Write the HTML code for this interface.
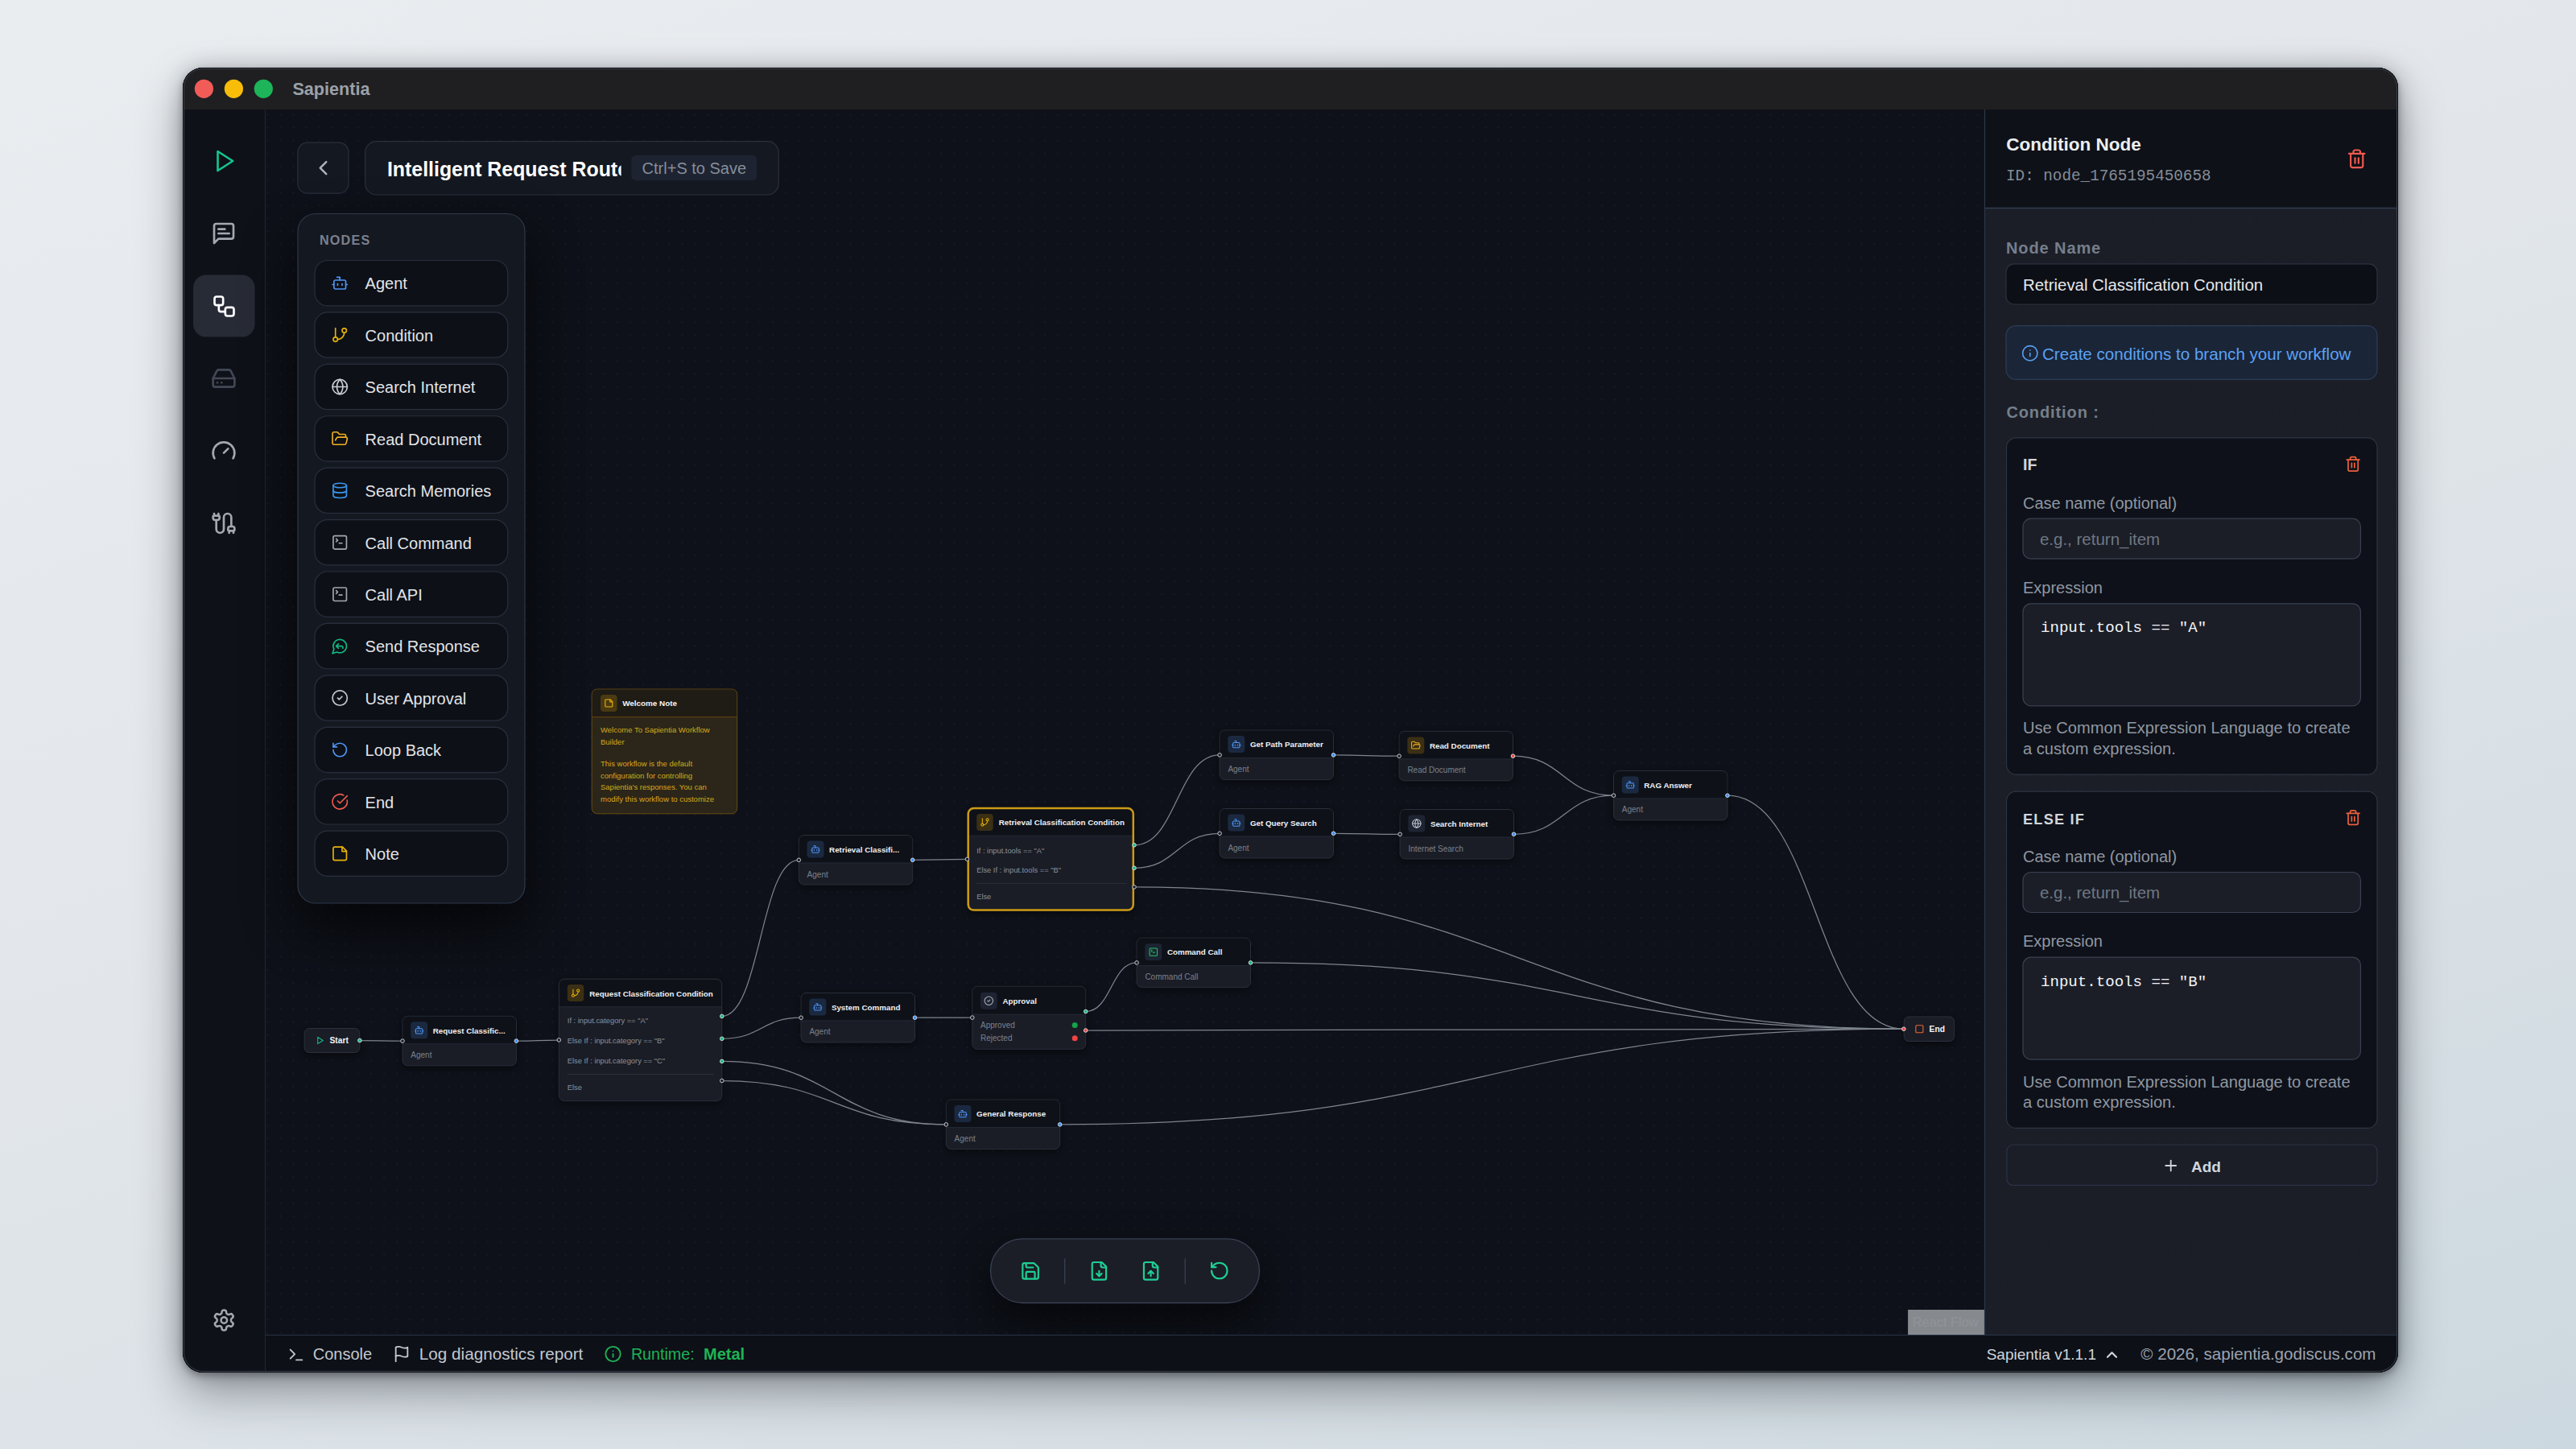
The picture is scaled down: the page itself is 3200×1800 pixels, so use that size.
<!DOCTYPE html>
<html><head><meta charset="utf-8"><title>Sapientia</title>
<style>
html,body{margin:0;padding:0;width:3200px;height:1800px;overflow:hidden;}
body{background:linear-gradient(160deg,#eaedf0 0%,#e3e7eb 40%,#dae1e6 70%,#ccd8df 100%);font-family:'Liberation Sans',sans-serif;position:relative;}
.shadow{position:absolute;left:227px;top:84px;width:2752px;height:1621px;border-radius:25px;box-shadow:0 26px 56px rgba(15,20,30,0.38),0 0 28px rgba(15,20,30,0.20),0 4px 10px rgba(0,0,0,0.30);background:#0f121a;}
svg{position:absolute;left:0;top:0;display:block;}
</style></head><body>
<div class="shadow"></div>
<svg width="3200" height="1800" viewBox="0 0 3200 1800">
<defs>
<clipPath id="win"><rect x="227" y="84" width="2752" height="1621" rx="25"/></clipPath>
<pattern id="dots" x="324.252" y="134.552" width="16.096" height="16.096" patternUnits="userSpaceOnUse"><circle cx="8.048" cy="8.048" r="0.85" fill="#1b1f27"/></pattern>
<pattern id="dots2" x="324.252" y="134.552" width="16.096" height="16.096" patternUnits="userSpaceOnUse"><circle cx="8.048" cy="8.048" r="0.8" fill="#21242c"/></pattern>
<filter id="shpanel" color-interpolation-filters="sRGB" x="-50%" y="-20%" width="200%" height="150%"><feGaussianBlur in="SourceAlpha" stdDeviation="34"/><feOffset dy="30"/><feComponentTransfer><feFuncA type="linear" slope="0.7"/></feComponentTransfer><feMerge><feMergeNode/><feMergeNode in="SourceGraphic"/></feMerge></filter>
<filter id="shnode" color-interpolation-filters="sRGB" x="-20%" y="-20%" width="140%" height="160%"><feGaussianBlur in="SourceAlpha" stdDeviation="4"/><feOffset dy="3"/><feComponentTransfer><feFuncA type="linear" slope="0.45"/></feComponentTransfer><feMerge><feMergeNode/><feMergeNode in="SourceGraphic"/></feMerge></filter>
<clipPath id="titleclip"><rect x="470" y="180" width="301.6" height="60"/></clipPath>
<filter id="shtool" color-interpolation-filters="sRGB" x="-40%" y="-120%" width="180%" height="340%"><feGaussianBlur in="SourceAlpha" stdDeviation="26"/><feOffset dy="22"/><feComponentTransfer><feFuncA type="linear" slope="0.6"/></feComponentTransfer><feMerge><feMergeNode/><feMergeNode in="SourceGraphic"/></feMerge></filter>
</defs>
<g clip-path="url(#win)">
<rect x="227" y="84" width="2752.00" height="1621.00" rx="0" fill="#0e1119"/>
<rect x="227" y="84" width="2752.00" height="52.00" rx="0" fill="#1f1f21"/>
<circle cx="253.4" cy="110.3" r="11.6" fill="#f25c58"/>
<circle cx="290.4" cy="110.3" r="11.6" fill="#f7bd08"/>
<circle cx="327.3" cy="110.3" r="11.6" fill="#1db45a"/>
<text x="363.4" y="118.4" font-family="'Liberation Sans', sans-serif" font-size="21.6" font-weight="bold" fill="#9ca1a9">Sapientia</text>
<rect x="227" y="136" width="103.00" height="1569.00" rx="0" fill="#0e1118"/>
<line x1="329.5" y1="136" x2="329.5" y2="1705" stroke="#222733" stroke-width="1"/>
<rect x="330" y="136" width="2135.00" height="1522.00" rx="0" fill="#0e1119"/>
<rect x="330" y="136" width="2135.00" height="1522.00" rx="0" fill="url(#dots)"/>
<g transform="translate(262.50,184.00) scale(1.3333)" fill="none" stroke="#14c48d" stroke-width="2" stroke-linecap="round" stroke-linejoin="round"><polygon points="6 3 20 12 6 21 6 3"/></g>
<g transform="translate(262.00,274.00) scale(1.3333)" fill="none" stroke="#a3a8b1" stroke-width="2" stroke-linecap="round" stroke-linejoin="round"><path d="M21 15a2 2 0 0 1-2 2H7l-4 4V5a2 2 0 0 1 2-2h14a2 2 0 0 1 2 2z"/><path d="M13 8H7"/><path d="M17 12H7"/></g>
<rect x="240" y="341.6" width="76.60" height="77.00" rx="16" fill="#272b35"/>
<g transform="translate(262.50,364.50) scale(1.3333)" fill="none" stroke="#ffffff" stroke-width="2" stroke-linecap="round" stroke-linejoin="round"><rect width="8" height="8" x="3" y="3" rx="2"/><path d="M7 11v4a2 2 0 0 0 2 2h4"/><rect width="8" height="8" x="13" y="13" rx="2"/></g>
<g transform="translate(262.00,454.00) scale(1.3333)" fill="none" stroke="#424855" stroke-width="2" stroke-linecap="round" stroke-linejoin="round"><line x1="22" x2="2" y1="12" y2="12"/><path d="M5.45 5.11 2 12v6a2 2 0 0 0 2 2h16a2 2 0 0 0 2-2v-6l-3.45-6.89A2 2 0 0 0 16.76 4H7.24a2 2 0 0 0-1.790 1.11z"/><line x1="6" x2="6.01" y1="16" y2="16"/><line x1="10" x2="10.01" y1="16" y2="16"/></g>
<g transform="translate(262.00,544.00) scale(1.3333)" fill="none" stroke="#a3a8b1" stroke-width="2" stroke-linecap="round" stroke-linejoin="round"><path d="m12 14 4-4"/><path d="M3.34 19a10 10 0 1 1 17.32 0"/></g>
<g transform="translate(262.00,634.00) scale(1.3333)" fill="none" stroke="#a3a8b1" stroke-width="2" stroke-linecap="round" stroke-linejoin="round"><path d="M17 21v-2a1 1 0 0 1-1-1v-1a2 2 0 0 1 2-2h2a2 2 0 0 1 2 2v1a1 1 0 0 1-1 1"/><path d="M19 15V6.5a1 1 0 0 0-7 0v11a1 1 0 0 1-7 0V9"/><path d="M21 21v-2h-4"/><path d="M3 5h4V3"/><path d="M7 5a1 1 0 0 1 1 1v1a2 2 0 0 1-2 2H4a2 2 0 0 1-2-2V6a1 1 0 0 1 1-1V3"/></g>
<g transform="translate(263.30,1625.00) scale(1.2500)" fill="none" stroke="#a3a8b1" stroke-width="2" stroke-linecap="round" stroke-linejoin="round"><path d="M12.22 2h-.44a2 2 0 0 0-2 2v.18a2 2 0 0 1-1 1.73l-.43.25a2 2 0 0 1-2 0l-.15-.08a2 2 0 0 0-2.73.73l-.22.38a2 2 0 0 0 .73 2.730l.15.1a2 2 0 0 1 1 1.72v.51a2 2 0 0 1-1 1.74l-.15.09a2 2 0 0 0-.73 2.73l.22.38a2 2 0 0 0 2.73.73l.15-.08a2 2 0 0 1 2 0l.43.25a2 2 0 0 1 1 1.73V20a2 2 0 0 0 2 2h.44a2 2 0 0 0 2-2v-.18a2 2 0 0 1 1-1.73l.43-.25a2 2 0 0 1 2 0l.15.08a2 2 0 0 0 2.73-.73l.22-.39a2 2 0 0 0-.73-2.73l-.15-.08a2 2 0 0 1-1-1.74v-.5a2 2 0 0 1 1-1.74l.15-.09a2 2 0 0 0 .73-2.73l-.22-.38a2 2 0 0 0-2.73-.73l-.15.08a2 2 0 0 1-2 0l-.43-.25a2 2 0 0 1-1-1.73V4a2 2 0 0 0-2-2z"/><circle cx="12" cy="12" r="3"/></g>
<g fill="none" stroke="#7e848e" stroke-width="1.25">
<path d="M446.9,1292.5 C473.20,1292.5 473.20,1293.1 499.5,1293.1"/>
<path d="M641.3,1293.1 C667.80,1293.1 667.80,1292.0 694.3,1292.0"/>
<path d="M896.8,1262.4 C944.55,1262.4 944.55,1068.3 992.3,1068.3"/>
<path d="M896.8,1290.3 C945.95,1290.3 945.95,1264.2 995.1,1264.2"/>
<path d="M896.8,1318.4 C1036.05,1318.4 1036.05,1396.9 1175.3,1396.9"/>
<path d="M896.8,1342.5 C1036.05,1342.5 1036.05,1396.9 1175.3,1396.9"/>
<path d="M1133.6,1068.3 C1167.55,1068.3 1167.55,1067.4 1201.5,1067.4"/>
<path d="M1409,1049.8 C1462.05,1049.8 1462.05,937.9 1515.1,937.9"/>
<path d="M1409,1078.3 C1462.05,1078.3 1462.05,1035.3 1515.1,1035.3"/>
<path d="M1409,1101.9 C1886.95,1101.9 1886.95,1278.2 2364.9,1278.2"/>
<path d="M1656.4,937.9 C1697.25,937.9 1697.25,939.2 1738.1,939.2"/>
<path d="M1656.4,1035.3 C1697.75,1035.3 1697.75,1036.3 1739.1,1036.3"/>
<path d="M1879.4,939.2 C1941.95,939.2 1941.95,988.2 2004.5,988.2"/>
<path d="M1880.4,1036.3 C1942.45,1036.3 1942.45,988.2 2004.5,988.2"/>
<path d="M2145.8,988.2 C2255.35,988.2 2255.35,1278.2 2364.9,1278.2"/>
<path d="M1136.4,1264.2 C1172.10,1264.2 1172.10,1264.1 1207.8,1264.1"/>
<path d="M1348.7,1256.5 C1380.40,1256.5 1380.40,1195.9 1412.1,1195.9"/>
<path d="M1348.7,1280.0 C1856.80,1280.0 1856.80,1278.2 2364.9,1278.2"/>
<path d="M1553.4,1195.9 C1959.15,1195.9 1959.15,1278.2 2364.9,1278.2"/>
<path d="M1316.6,1396.9 C1840.75,1396.9 1840.75,1278.2 2364.9,1278.2"/>
</g>
<g filter="url(#shnode)">
<rect x="500" y="1262.3" width="141.4" height="61.5" rx="6.5" fill="#1a1d26" stroke="#2a2f3b" stroke-width="1"/>
</g>
<path d="M500.5,1296.8 V1268.8 a6,6 0 0 1 6,-6 H634.9 a6,6 0 0 1 6,6 V1296.8 Z" fill="#0e1118"/>
<line x1="500" y1="1296.8" x2="641.4" y2="1296.8" stroke="#252a35" stroke-width="1"/>
<rect x="510.2" y="1269.3" width="21.00" height="21.00" rx="4" fill="#1b2940"/>
<g transform="translate(514.45,1273.55) scale(0.5208)" fill="none" stroke="#4f96f5" stroke-width="2" stroke-linecap="round" stroke-linejoin="round"><path d="M12 8V4H8"/><rect width="16" height="12" x="4" y="8" rx="2"/><path d="M2 14h2"/><path d="M20 14h2"/><path d="M15 13v2"/><path d="M9 13v2"/></g>
<text x="537.8" y="1283.6" font-family="'Liberation Sans', sans-serif" font-size="9.8" font-weight="bold" fill="#eef0f3">Request Classific...</text>
<text x="510.3" y="1314.3" font-family="'Liberation Sans', sans-serif" font-size="10" font-weight="normal" fill="#7a818d">Agent</text>
<circle cx="500" cy="1293.1" r="2.3" fill="#1a1d26" stroke="#c5c9d0" stroke-width="1"/>
<circle cx="641.4" cy="1293.1" r="2.3" fill="#3b8cf5" stroke="#e5e7eb" stroke-width="0.9"/>
<g filter="url(#shnode)">
<rect x="992.3" y="1037.5" width="141.4" height="61.5" rx="6.5" fill="#1a1d26" stroke="#2a2f3b" stroke-width="1"/>
</g>
<path d="M992.8,1072.0 V1044.0 a6,6 0 0 1 6,-6 H1127.2 a6,6 0 0 1 6,6 V1072.0 Z" fill="#0e1118"/>
<line x1="992.3" y1="1072.0" x2="1133.7" y2="1072.0" stroke="#252a35" stroke-width="1"/>
<rect x="1002.5" y="1044.5" width="21.00" height="21.00" rx="4" fill="#1b2940"/>
<g transform="translate(1006.75,1048.75) scale(0.5208)" fill="none" stroke="#4f96f5" stroke-width="2" stroke-linecap="round" stroke-linejoin="round"><path d="M12 8V4H8"/><rect width="16" height="12" x="4" y="8" rx="2"/><path d="M2 14h2"/><path d="M20 14h2"/><path d="M15 13v2"/><path d="M9 13v2"/></g>
<text x="1030.1" y="1058.8" font-family="'Liberation Sans', sans-serif" font-size="9.8" font-weight="bold" fill="#eef0f3">Retrieval Classifi...</text>
<text x="1002.6" y="1089.5" font-family="'Liberation Sans', sans-serif" font-size="10" font-weight="normal" fill="#7a818d">Agent</text>
<circle cx="992.3" cy="1068.3" r="2.3" fill="#1a1d26" stroke="#c5c9d0" stroke-width="1"/>
<circle cx="1133.7" cy="1068.3" r="2.3" fill="#3b8cf5" stroke="#e5e7eb" stroke-width="0.9"/>
<g filter="url(#shnode)">
<rect x="1515.1" y="907.1" width="141.4" height="61.5" rx="6.5" fill="#1a1d26" stroke="#2a2f3b" stroke-width="1"/>
</g>
<path d="M1515.6,941.6 V913.6 a6,6 0 0 1 6,-6 H1650.0 a6,6 0 0 1 6,6 V941.6 Z" fill="#0e1118"/>
<line x1="1515.1" y1="941.6" x2="1656.5" y2="941.6" stroke="#252a35" stroke-width="1"/>
<rect x="1525.3" y="914.1" width="21.00" height="21.00" rx="4" fill="#1b2940"/>
<g transform="translate(1529.55,918.35) scale(0.5208)" fill="none" stroke="#4f96f5" stroke-width="2" stroke-linecap="round" stroke-linejoin="round"><path d="M12 8V4H8"/><rect width="16" height="12" x="4" y="8" rx="2"/><path d="M2 14h2"/><path d="M20 14h2"/><path d="M15 13v2"/><path d="M9 13v2"/></g>
<text x="1552.9" y="928.4" font-family="'Liberation Sans', sans-serif" font-size="9.8" font-weight="bold" fill="#eef0f3">Get Path Parameter</text>
<text x="1525.4" y="959.1" font-family="'Liberation Sans', sans-serif" font-size="10" font-weight="normal" fill="#7a818d">Agent</text>
<circle cx="1515.1" cy="937.9" r="2.3" fill="#1a1d26" stroke="#c5c9d0" stroke-width="1"/>
<circle cx="1656.5" cy="937.9" r="2.3" fill="#3b8cf5" stroke="#e5e7eb" stroke-width="0.9"/>
<g filter="url(#shnode)">
<rect x="1738.1" y="908.4" width="141.4" height="61.5" rx="6.5" fill="#1a1d26" stroke="#2a2f3b" stroke-width="1"/>
</g>
<path d="M1738.6,942.9 V914.9 a6,6 0 0 1 6,-6 H1873.0 a6,6 0 0 1 6,6 V942.9 Z" fill="#0e1118"/>
<line x1="1738.1" y1="942.9" x2="1879.5" y2="942.9" stroke="#252a35" stroke-width="1"/>
<rect x="1748.3" y="915.4" width="21.00" height="21.00" rx="4" fill="#3b2f14"/>
<g transform="translate(1752.55,919.65) scale(0.5208)" fill="none" stroke="#f2b01e" stroke-width="2" stroke-linecap="round" stroke-linejoin="round"><path d="m6 14 1.5-2.9A2 2 0 0 1 9.24 10H20a2 2 0 0 1 1.94 2.5l-1.54 6a2 2 0 0 1-1.950 1.5H4a2 2 0 0 1-2-2V5a2 2 0 0 1 2-2h3.9a2 2 0 0 1 1.69.9l.81 1.2a2 2 0 0 0 1.67.9H18a2 2 0 0 1 2 2v2"/></g>
<text x="1775.9" y="929.7" font-family="'Liberation Sans', sans-serif" font-size="9.8" font-weight="bold" fill="#eef0f3">Read Document</text>
<text x="1748.4" y="960.4" font-family="'Liberation Sans', sans-serif" font-size="10" font-weight="normal" fill="#7a818d">Read Document</text>
<circle cx="1738.1" cy="939.1999999999999" r="2.3" fill="#1a1d26" stroke="#c5c9d0" stroke-width="1"/>
<circle cx="1879.5" cy="939.2" r="2.3" fill="#ef4444" stroke="#e5e7eb" stroke-width="0.9"/>
<g filter="url(#shnode)">
<rect x="1515.1" y="1004.5" width="141.4" height="61.5" rx="6.5" fill="#1a1d26" stroke="#2a2f3b" stroke-width="1"/>
</g>
<path d="M1515.6,1039.0 V1011.0 a6,6 0 0 1 6,-6 H1650.0 a6,6 0 0 1 6,6 V1039.0 Z" fill="#0e1118"/>
<line x1="1515.1" y1="1039.0" x2="1656.5" y2="1039.0" stroke="#252a35" stroke-width="1"/>
<rect x="1525.3" y="1011.5" width="21.00" height="21.00" rx="4" fill="#1b2940"/>
<g transform="translate(1529.55,1015.75) scale(0.5208)" fill="none" stroke="#4f96f5" stroke-width="2" stroke-linecap="round" stroke-linejoin="round"><path d="M12 8V4H8"/><rect width="16" height="12" x="4" y="8" rx="2"/><path d="M2 14h2"/><path d="M20 14h2"/><path d="M15 13v2"/><path d="M9 13v2"/></g>
<text x="1552.9" y="1025.8" font-family="'Liberation Sans', sans-serif" font-size="9.8" font-weight="bold" fill="#eef0f3">Get Query Search</text>
<text x="1525.4" y="1056.5" font-family="'Liberation Sans', sans-serif" font-size="10" font-weight="normal" fill="#7a818d">Agent</text>
<circle cx="1515.1" cy="1035.3" r="2.3" fill="#1a1d26" stroke="#c5c9d0" stroke-width="1"/>
<circle cx="1656.5" cy="1035.3" r="2.3" fill="#3b8cf5" stroke="#e5e7eb" stroke-width="0.9"/>
<g filter="url(#shnode)">
<rect x="1739.1" y="1005.5" width="141.4" height="61.5" rx="6.5" fill="#1a1d26" stroke="#2a2f3b" stroke-width="1"/>
</g>
<path d="M1739.6,1040.0 V1012.0 a6,6 0 0 1 6,-6 H1874.0 a6,6 0 0 1 6,6 V1040.0 Z" fill="#0e1118"/>
<line x1="1739.1" y1="1040.0" x2="1880.5" y2="1040.0" stroke="#252a35" stroke-width="1"/>
<rect x="1749.3" y="1012.5" width="21.00" height="21.00" rx="4" fill="#1e2433"/>
<g transform="translate(1753.55,1016.75) scale(0.5208)" fill="none" stroke="#c3c8cf" stroke-width="2" stroke-linecap="round" stroke-linejoin="round"><circle cx="12" cy="12" r="10"/><path d="M12 2a14.5 14.5 0 0 0 0 20 14.5 14.5 0 0 0 0-20"/><path d="M2 12h20"/></g>
<text x="1776.9" y="1026.8" font-family="'Liberation Sans', sans-serif" font-size="9.8" font-weight="bold" fill="#eef0f3">Search Internet</text>
<text x="1749.4" y="1057.5" font-family="'Liberation Sans', sans-serif" font-size="10" font-weight="normal" fill="#7a818d">Internet Search</text>
<circle cx="1739.1" cy="1036.3" r="2.3" fill="#1a1d26" stroke="#c5c9d0" stroke-width="1"/>
<circle cx="1880.5" cy="1036.3" r="2.3" fill="#3b8cf5" stroke="#e5e7eb" stroke-width="0.9"/>
<g filter="url(#shnode)">
<rect x="2004.5" y="957.4" width="141.4" height="61.5" rx="6.5" fill="#1a1d26" stroke="#2a2f3b" stroke-width="1"/>
</g>
<path d="M2005.0,991.9 V963.9 a6,6 0 0 1 6,-6 H2139.4 a6,6 0 0 1 6,6 V991.9 Z" fill="#0e1118"/>
<line x1="2004.5" y1="991.9" x2="2145.9" y2="991.9" stroke="#252a35" stroke-width="1"/>
<rect x="2014.7" y="964.4" width="21.00" height="21.00" rx="4" fill="#1b2940"/>
<g transform="translate(2018.95,968.65) scale(0.5208)" fill="none" stroke="#4f96f5" stroke-width="2" stroke-linecap="round" stroke-linejoin="round"><path d="M12 8V4H8"/><rect width="16" height="12" x="4" y="8" rx="2"/><path d="M2 14h2"/><path d="M20 14h2"/><path d="M15 13v2"/><path d="M9 13v2"/></g>
<text x="2042.3" y="978.7" font-family="'Liberation Sans', sans-serif" font-size="9.8" font-weight="bold" fill="#eef0f3">RAG Answer</text>
<text x="2014.8" y="1009.4" font-family="'Liberation Sans', sans-serif" font-size="10" font-weight="normal" fill="#7a818d">Agent</text>
<circle cx="2004.5" cy="988.1999999999999" r="2.3" fill="#1a1d26" stroke="#c5c9d0" stroke-width="1"/>
<circle cx="2145.9" cy="988.2" r="2.3" fill="#3b8cf5" stroke="#e5e7eb" stroke-width="0.9"/>
<g filter="url(#shnode)">
<rect x="995.1" y="1233.4" width="141.4" height="61.5" rx="6.5" fill="#1a1d26" stroke="#2a2f3b" stroke-width="1"/>
</g>
<path d="M995.6,1267.9 V1239.9 a6,6 0 0 1 6,-6 H1130.0 a6,6 0 0 1 6,6 V1267.9 Z" fill="#0e1118"/>
<line x1="995.1" y1="1267.9" x2="1136.5" y2="1267.9" stroke="#252a35" stroke-width="1"/>
<rect x="1005.3000000000001" y="1240.4" width="21.00" height="21.00" rx="4" fill="#1b2940"/>
<g transform="translate(1009.55,1244.65) scale(0.5208)" fill="none" stroke="#4f96f5" stroke-width="2" stroke-linecap="round" stroke-linejoin="round"><path d="M12 8V4H8"/><rect width="16" height="12" x="4" y="8" rx="2"/><path d="M2 14h2"/><path d="M20 14h2"/><path d="M15 13v2"/><path d="M9 13v2"/></g>
<text x="1032.9" y="1254.7" font-family="'Liberation Sans', sans-serif" font-size="9.8" font-weight="bold" fill="#eef0f3">System Command</text>
<text x="1005.4" y="1285.4" font-family="'Liberation Sans', sans-serif" font-size="10" font-weight="normal" fill="#7a818d">Agent</text>
<circle cx="995.1" cy="1264.2" r="2.3" fill="#1a1d26" stroke="#c5c9d0" stroke-width="1"/>
<circle cx="1136.5" cy="1264.2" r="2.3" fill="#3b8cf5" stroke="#e5e7eb" stroke-width="0.9"/>
<g filter="url(#shnode)">
<rect x="1412.1" y="1165.1" width="141.4" height="61.5" rx="6.5" fill="#1a1d26" stroke="#2a2f3b" stroke-width="1"/>
</g>
<path d="M1412.6,1199.6 V1171.6 a6,6 0 0 1 6,-6 H1547.0 a6,6 0 0 1 6,6 V1199.6 Z" fill="#0e1118"/>
<line x1="1412.1" y1="1199.6" x2="1553.5" y2="1199.6" stroke="#252a35" stroke-width="1"/>
<rect x="1422.3" y="1172.1" width="21.00" height="21.00" rx="4" fill="#1c2433"/>
<g transform="translate(1426.55,1176.35) scale(0.5208)" fill="none" stroke="#22c55e" stroke-width="2" stroke-linecap="round" stroke-linejoin="round"><path d="m7 11 2-2-2-2"/><path d="M11 13h4"/><rect width="18" height="18" x="3" y="3" rx="2" ry="2"/></g>
<text x="1449.9" y="1186.4" font-family="'Liberation Sans', sans-serif" font-size="9.8" font-weight="bold" fill="#eef0f3">Command Call</text>
<text x="1422.4" y="1217.1" font-family="'Liberation Sans', sans-serif" font-size="10" font-weight="normal" fill="#7a818d">Command Call</text>
<circle cx="1412.1" cy="1195.8999999999999" r="2.3" fill="#1a1d26" stroke="#c5c9d0" stroke-width="1"/>
<circle cx="1553.5" cy="1195.9" r="2.3" fill="#12b981" stroke="#e5e7eb" stroke-width="0.9"/>
<g filter="url(#shnode)">
<rect x="1175.3" y="1366.1" width="141.4" height="61.5" rx="6.5" fill="#1a1d26" stroke="#2a2f3b" stroke-width="1"/>
</g>
<path d="M1175.8,1400.6 V1372.6 a6,6 0 0 1 6,-6 H1310.2 a6,6 0 0 1 6,6 V1400.6 Z" fill="#0e1118"/>
<line x1="1175.3" y1="1400.6" x2="1316.7" y2="1400.6" stroke="#252a35" stroke-width="1"/>
<rect x="1185.5" y="1373.1" width="21.00" height="21.00" rx="4" fill="#1b2940"/>
<g transform="translate(1189.75,1377.35) scale(0.5208)" fill="none" stroke="#4f96f5" stroke-width="2" stroke-linecap="round" stroke-linejoin="round"><path d="M12 8V4H8"/><rect width="16" height="12" x="4" y="8" rx="2"/><path d="M2 14h2"/><path d="M20 14h2"/><path d="M15 13v2"/><path d="M9 13v2"/></g>
<text x="1213.1" y="1387.4" font-family="'Liberation Sans', sans-serif" font-size="9.8" font-weight="bold" fill="#eef0f3">General Response</text>
<text x="1185.6" y="1418.1" font-family="'Liberation Sans', sans-serif" font-size="10" font-weight="normal" fill="#7a818d">Agent</text>
<circle cx="1175.3" cy="1396.8999999999999" r="2.3" fill="#1a1d26" stroke="#c5c9d0" stroke-width="1"/>
<circle cx="1316.7" cy="1396.9" r="2.3" fill="#3b8cf5" stroke="#e5e7eb" stroke-width="0.9"/>
<g filter="url(#shnode)"><rect x="1207.8" y="1225.2" width="140.9" height="78.1" rx="6.5" fill="#1a1d26" stroke="#2a2f3b" stroke-width="1"/></g>
<path d="M1208.3,1260.2 V1231.7 a6,6 0 0 1 6,-6 H1342.2 a6,6 0 0 1 6,6 V1260.2 Z" fill="#0e1118"/>
<line x1="1207.8" y1="1260.2" x2="1348.7" y2="1260.2" stroke="#252a35" stroke-width="1"/>
<rect x="1218.0" y="1232.7" width="20.60" height="21.00" rx="4" fill="#1e2433"/>
<g transform="translate(1222.05,1236.95) scale(0.5208)" fill="none" stroke="#aeb3bb" stroke-width="2" stroke-linecap="round" stroke-linejoin="round"><circle cx="12" cy="12" r="10"/><path d="m9 12 2 2 4-4"/></g>
<text x="1245.5" y="1246.7" font-family="'Liberation Sans', sans-serif" font-size="9.8" font-weight="bold" fill="#eef0f3">Approval</text>
<text x="1218.0" y="1277.0" font-family="'Liberation Sans', sans-serif" font-size="10" font-weight="normal" fill="#7a818d">Approved</text>
<text x="1218.0" y="1292.8" font-family="'Liberation Sans', sans-serif" font-size="10" font-weight="normal" fill="#7a818d">Rejected</text>
<circle cx="1335.2" cy="1273.5" r="3.5" fill="#16a34a"/>
<circle cx="1335.2" cy="1289.8" r="3.5" fill="#ef4444"/>
<circle cx="1207.8" cy="1264.1000000000001" r="2.3" fill="#1a1d26" stroke="#c5c9d0" stroke-width="1"/>
<circle cx="1348.7" cy="1256.5" r="2.3" fill="#12b981" stroke="#e5e7eb" stroke-width="0.9"/>
<circle cx="1348.7" cy="1280.0" r="2.3" fill="#ef4444" stroke="#e5e7eb" stroke-width="0.9"/>
<g filter="url(#shnode)"><rect x="694.3" y="1216.1" width="202.5" height="151.6" rx="7" fill="#1a1d26"/></g>
<path d="M694.8,1250.7 V1223.1 a6.5,6.5 0 0 1 6.5,-6.5 H889.8 a6.5,6.5 0 0 1 6.5,6.5 V1250.7 Z" fill="#0e1118"/>
<line x1="694.3" y1="1250.7" x2="896.8" y2="1250.7" stroke="#252a35" stroke-width="1"/>
<rect x="694.3" y="1216.1" width="202.5" height="151.6" rx="7" fill="none" stroke="#2a2f3b" stroke-width="1"/>
<rect x="704.8" y="1223.1" width="20.50" height="21.00" rx="4" fill="#3b2f14"/>
<g transform="translate(708.80,1227.35) scale(0.5208)" fill="none" stroke="#eab308" stroke-width="2" stroke-linecap="round" stroke-linejoin="round"><line x1="6" x2="6" y1="3" y2="15"/><circle cx="18" cy="6" r="3"/><circle cx="6" cy="18" r="3"/><path d="M18 9a9 9 0 0 1-9 9"/></g>
<text x="732.3" y="1237.5" font-family="'Liberation Sans', sans-serif" font-size="9.8" font-weight="bold" fill="#eef0f3">Request Classification Condition</text>
<text x="704.8" y="1271.4" font-family="'Liberation Sans', sans-serif" font-size="9.3" font-weight="normal" fill="#8a919c">If : input.category == &quot;A&quot;</text>
<text x="704.8" y="1296.3" font-family="'Liberation Sans', sans-serif" font-size="9.3" font-weight="normal" fill="#8a919c">Else If : input.category == &quot;B&quot;</text>
<text x="704.8" y="1321.1" font-family="'Liberation Sans', sans-serif" font-size="9.3" font-weight="normal" fill="#8a919c">Else If : input.category == &quot;C&quot;</text>
<line x1="704.8" y1="1334.5" x2="886.8" y2="1334.5" stroke="#2a303b" stroke-width="1"/>
<text x="704.8" y="1354" font-family="'Liberation Sans', sans-serif" font-size="9.3" font-weight="normal" fill="#8a919c">Else</text>
<circle cx="694.3" cy="1291.8999999999999" r="2.3" fill="#1a1d26" stroke="#c5c9d0" stroke-width="1"/>
<circle cx="896.8" cy="1262.4" r="2.3" fill="#12b981" stroke="#e5e7eb" stroke-width="0.9"/>
<circle cx="896.8" cy="1290.3" r="2.3" fill="#12b981" stroke="#e5e7eb" stroke-width="0.9"/>
<circle cx="896.8" cy="1318.4" r="2.3" fill="#12b981" stroke="#e5e7eb" stroke-width="0.9"/>
<circle cx="896.8" cy="1342.5" r="2.3" fill="#1a1d26" stroke="#c5c9d0" stroke-width="1"/>
<g filter="url(#shnode)"><rect x="1201.5" y="1002.8" width="207.5" height="129" rx="7" fill="#1a1d26"/></g>
<path d="M1202.0,1038.2 V1009.8 a6.5,6.5 0 0 1 6.5,-6.5 H1402.0 a6.5,6.5 0 0 1 6.5,6.5 V1038.2 Z" fill="#0e1118"/>
<line x1="1201.5" y1="1038.2" x2="1409.0" y2="1038.2" stroke="#252a35" stroke-width="1"/>
<rect x="1202.7" y="1004.0" width="205.1" height="126.6" rx="7" fill="none" stroke="#cc9a16" stroke-width="2.5"/>
<rect x="1213.2" y="1011.0" width="20.50" height="21.00" rx="4" fill="#3b2f14"/>
<g transform="translate(1217.20,1015.25) scale(0.5208)" fill="none" stroke="#eab308" stroke-width="2" stroke-linecap="round" stroke-linejoin="round"><line x1="6" x2="6" y1="3" y2="15"/><circle cx="18" cy="6" r="3"/><circle cx="6" cy="18" r="3"/><path d="M18 9a9 9 0 0 1-9 9"/></g>
<text x="1240.7" y="1025" font-family="'Liberation Sans', sans-serif" font-size="9.8" font-weight="bold" fill="#eef0f3">Retrieval Classification Condition</text>
<text x="1213.2" y="1059.7" font-family="'Liberation Sans', sans-serif" font-size="9.3" font-weight="normal" fill="#8a919c">If : input.tools == &quot;A&quot;</text>
<text x="1213.2" y="1084.4" font-family="'Liberation Sans', sans-serif" font-size="9.3" font-weight="normal" fill="#8a919c">Else If : input.tools == &quot;B&quot;</text>
<line x1="1213.2" y1="1097.3" x2="1399.0" y2="1097.3" stroke="#2a303b" stroke-width="1"/>
<text x="1213.2" y="1117.2" font-family="'Liberation Sans', sans-serif" font-size="9.3" font-weight="normal" fill="#8a919c">Else</text>
<circle cx="1201.5" cy="1067.3" r="2.3" fill="#1a1d26" stroke="#c5c9d0" stroke-width="1"/>
<circle cx="1409.0" cy="1049.8" r="2.3" fill="#12b981" stroke="#e5e7eb" stroke-width="0.9"/>
<circle cx="1409.0" cy="1078.3" r="2.3" fill="#12b981" stroke="#e5e7eb" stroke-width="0.9"/>
<circle cx="1409.0" cy="1101.9" r="2.3" fill="#1a1d26" stroke="#c5c9d0" stroke-width="1"/>
<g filter="url(#shnode)">
<rect x="378.1" y="1277.5" width="68.70" height="30.00" rx="6" fill="#1a1d26" stroke="#2c313c" stroke-width="1"/>
</g>
<g transform="translate(392.00,1287.00) scale(0.4583)" fill="none" stroke="#14c48d" stroke-width="2.2" stroke-linecap="round" stroke-linejoin="round"><polygon points="6 3 20 12 6 21 6 3"/></g>
<text x="409.4" y="1296.3" font-family="'Liberation Sans', sans-serif" font-size="10.3" font-weight="bold" fill="#f3f4f6">Start</text>
<circle cx="446.9" cy="1292.5" r="2.3" fill="#12b981" stroke="#e5e7eb" stroke-width="0.9"/>
<g filter="url(#shnode)">
<rect x="2365.2" y="1263" width="62.50" height="30.50" rx="6" fill="#1a1d26" stroke="#2c313c" stroke-width="1"/>
</g>
<g transform="translate(2378.40,1272.20) scale(0.5000)" fill="none" stroke="#e8683a" stroke-width="2.2" stroke-linecap="round" stroke-linejoin="round"><rect width="18" height="18" x="3" y="3" rx="2"/></g>
<text x="2396.6" y="1281.8" font-family="'Liberation Sans', sans-serif" font-size="10.3" font-weight="bold" fill="#f3f4f6">End</text>
<circle cx="2364.9" cy="1278.2" r="2.3" fill="#ef4444" stroke="#e5e7eb" stroke-width="0.9"/>
<rect x="735.2" y="856.1" width="180.50" height="154.70" rx="6.5" fill="#2b2619" stroke="#6a4d12" stroke-width="1"/>
<path d="M735.7,890.7 V862.6 a6,6 0 0 1 6,-6 H909.2 a6,6 0 0 1 6,6 V890.7 Z" fill="#1f1b15"/>
<line x1="735.2" y1="890.7" x2="915.7" y2="890.7" stroke="#5a3c10" stroke-width="1.2"/>
<rect x="746" y="863" width="20.60" height="21.00" rx="4" fill="#4a3a12"/>
<g transform="translate(750.30,867.50) scale(0.5000)" fill="none" stroke="#eab308" stroke-width="2.2" stroke-linecap="round" stroke-linejoin="round"><path d="M15.5 3H5a2 2 0 0 0-2 2v14c0 1.1.9 2 2 2h14a2 2 0 0 0 2-2V8.5L15.5 3Z"/><path d="M15 3v6h6"/></g>
<text x="773.2" y="877" font-family="'Liberation Sans', sans-serif" font-size="9.9" font-weight="bold" fill="#f3f4f6">Welcome Note</text>
<text x="746" y="909.8" font-family="'Liberation Sans', sans-serif" font-size="9.5" font-weight="normal" fill="#d9a61c">Welcome To Sapientia Workflow</text>
<text x="746" y="924.5" font-family="'Liberation Sans', sans-serif" font-size="9.5" font-weight="normal" fill="#d9a61c">Builder</text>
<text x="746" y="952.4" font-family="'Liberation Sans', sans-serif" font-size="9.5" font-weight="normal" fill="#d9a61c">This workflow is the default</text>
<text x="746" y="967" font-family="'Liberation Sans', sans-serif" font-size="9.5" font-weight="normal" fill="#d9a61c">configuration for controlling</text>
<text x="746" y="981.4" font-family="'Liberation Sans', sans-serif" font-size="9.5" font-weight="normal" fill="#d9a61c">Sapientia&#x27;s responses. You can</text>
<text x="746" y="995.9" font-family="'Liberation Sans', sans-serif" font-size="9.5" font-weight="normal" fill="#d9a61c">modify this workflow to customize</text>
<rect x="369.9" y="177.2" width="63.10" height="63.00" rx="12" fill="#141820" stroke="#2a303c" stroke-width="1.2"/>
<g transform="translate(386.50,193.70) scale(1.2500)" fill="none" stroke="#aeb3bb" stroke-width="2" stroke-linecap="round" stroke-linejoin="round"><path d="m15 18-6-6 6-6"/></g>
<rect x="453.6" y="175.6" width="513.60" height="66.40" rx="14" fill="#141820" stroke="#2a303c" stroke-width="1.2"/>
<g clip-path="url(#titleclip)">
<text x="480.9" y="218.5" font-family="'Liberation Sans', sans-serif" font-size="24.9" font-weight="bold" fill="#ffffff">Intelligent Request Router</text>
</g>
<rect x="784.2" y="192.8" width="156.00" height="31.50" rx="6" fill="#1d2330"/>
<text x="797.6" y="216" font-family="'Liberation Sans', sans-serif" font-size="20" font-weight="normal" fill="#868e9b">Ctrl+S to Save</text>
<g filter="url(#shpanel)">
<rect x="370" y="265.5" width="282.00" height="856.50" rx="22" fill="#141820" stroke="#2f394a" stroke-width="1.2"/>
</g>
<text x="396.9" y="304.3" font-family="'Liberation Sans', sans-serif" font-size="16.2" font-weight="bold" fill="#7a818d" letter-spacing="1.2">NODES</text>
<rect x="391" y="323.5" width="239.80" height="56.30" rx="16" fill="#0d1017" stroke="#28303d" stroke-width="1.2"/>
<g transform="translate(411.20,340.70) scale(0.9167)" fill="none" stroke="#4f96f5" stroke-width="1.8" stroke-linecap="round" stroke-linejoin="round"><path d="M12 8V4H8"/><rect width="16" height="12" x="4" y="8" rx="2"/><path d="M2 14h2"/><path d="M20 14h2"/><path d="M15 13v2"/><path d="M9 13v2"/></g>
<text x="453.6" y="359.4" font-family="'Liberation Sans', sans-serif" font-size="20" font-weight="normal" fill="#e2e4e8">Agent</text>
<rect x="391" y="387.92" width="239.80" height="56.30" rx="16" fill="#0d1017" stroke="#28303d" stroke-width="1.2"/>
<g transform="translate(411.20,405.12) scale(0.9167)" fill="none" stroke="#eab308" stroke-width="1.8" stroke-linecap="round" stroke-linejoin="round"><line x1="6" x2="6" y1="3" y2="15"/><circle cx="18" cy="6" r="3"/><circle cx="6" cy="18" r="3"/><path d="M18 9a9 9 0 0 1-9 9"/></g>
<text x="453.6" y="423.82" font-family="'Liberation Sans', sans-serif" font-size="20" font-weight="normal" fill="#e2e4e8">Condition</text>
<rect x="391" y="452.34" width="239.80" height="56.30" rx="16" fill="#0d1017" stroke="#28303d" stroke-width="1.2"/>
<g transform="translate(411.20,469.54) scale(0.9167)" fill="none" stroke="#c9cdd4" stroke-width="1.8" stroke-linecap="round" stroke-linejoin="round"><circle cx="12" cy="12" r="10"/><path d="M12 2a14.5 14.5 0 0 0 0 20 14.5 14.5 0 0 0 0-20"/><path d="M2 12h20"/></g>
<text x="453.6" y="488.24" font-family="'Liberation Sans', sans-serif" font-size="20" font-weight="normal" fill="#e2e4e8">Search Internet</text>
<rect x="391" y="516.76" width="239.80" height="56.30" rx="16" fill="#0d1017" stroke="#28303d" stroke-width="1.2"/>
<g transform="translate(411.20,533.96) scale(0.9167)" fill="none" stroke="#f2b01e" stroke-width="1.8" stroke-linecap="round" stroke-linejoin="round"><path d="m6 14 1.5-2.9A2 2 0 0 1 9.24 10H20a2 2 0 0 1 1.94 2.5l-1.54 6a2 2 0 0 1-1.950 1.5H4a2 2 0 0 1-2-2V5a2 2 0 0 1 2-2h3.9a2 2 0 0 1 1.69.9l.81 1.2a2 2 0 0 0 1.67.9H18a2 2 0 0 1 2 2v2"/></g>
<text x="453.6" y="552.66" font-family="'Liberation Sans', sans-serif" font-size="20" font-weight="normal" fill="#e2e4e8">Read Document</text>
<rect x="391" y="581.18" width="239.80" height="56.30" rx="16" fill="#0d1017" stroke="#28303d" stroke-width="1.2"/>
<g transform="translate(411.20,598.38) scale(0.9167)" fill="none" stroke="#3b96ee" stroke-width="1.8" stroke-linecap="round" stroke-linejoin="round"><ellipse cx="12" cy="5" rx="9" ry="3"/><path d="M3 5V19A9 3 0 0 0 21 19V5"/><path d="M3 12A9 3 0 0 0 21 12"/></g>
<text x="453.6" y="617.08" font-family="'Liberation Sans', sans-serif" font-size="20" font-weight="normal" fill="#e2e4e8">Search Memories</text>
<rect x="391" y="645.6" width="239.80" height="56.30" rx="16" fill="#0d1017" stroke="#28303d" stroke-width="1.2"/>
<g transform="translate(411.20,662.80) scale(0.9167)" fill="none" stroke="#a3a8b1" stroke-width="1.8" stroke-linecap="round" stroke-linejoin="round"><path d="m7 11 2-2-2-2"/><path d="M11 13h4"/><rect width="18" height="18" x="3" y="3" rx="2" ry="2"/></g>
<text x="453.6" y="681.5" font-family="'Liberation Sans', sans-serif" font-size="20" font-weight="normal" fill="#e2e4e8">Call Command</text>
<rect x="391" y="710.02" width="239.80" height="56.30" rx="16" fill="#0d1017" stroke="#28303d" stroke-width="1.2"/>
<g transform="translate(411.20,727.22) scale(0.9167)" fill="none" stroke="#a3a8b1" stroke-width="1.8" stroke-linecap="round" stroke-linejoin="round"><path d="m7 11 2-2-2-2"/><path d="M11 13h4"/><rect width="18" height="18" x="3" y="3" rx="2" ry="2"/></g>
<text x="453.6" y="745.92" font-family="'Liberation Sans', sans-serif" font-size="20" font-weight="normal" fill="#e2e4e8">Call API</text>
<rect x="391" y="774.44" width="239.80" height="56.30" rx="16" fill="#0d1017" stroke="#28303d" stroke-width="1.2"/>
<g transform="translate(411.20,791.64) scale(0.9167)" fill="none" stroke="#12b981" stroke-width="1.8" stroke-linecap="round" stroke-linejoin="round"><path d="M7.9 20A9 9 0 1 0 4 16.1L2 22Z"/><path d="m10 15-3-3 3-3"/><path d="M7 12h7a2 2 0 0 1 2 2v1"/></g>
<text x="453.6" y="810.34" font-family="'Liberation Sans', sans-serif" font-size="20" font-weight="normal" fill="#e2e4e8">Send Response</text>
<rect x="391" y="838.86" width="239.80" height="56.30" rx="16" fill="#0d1017" stroke="#28303d" stroke-width="1.2"/>
<g transform="translate(411.20,856.06) scale(0.9167)" fill="none" stroke="#c3c8cf" stroke-width="1.8" stroke-linecap="round" stroke-linejoin="round"><circle cx="12" cy="12" r="10"/><path d="m9 12 2 2 4-4"/></g>
<text x="453.6" y="874.76" font-family="'Liberation Sans', sans-serif" font-size="20" font-weight="normal" fill="#e2e4e8">User Approval</text>
<rect x="391" y="903.28" width="239.80" height="56.30" rx="16" fill="#0d1017" stroke="#28303d" stroke-width="1.2"/>
<g transform="translate(411.20,920.48) scale(0.9167)" fill="none" stroke="#4f96f5" stroke-width="1.8" stroke-linecap="round" stroke-linejoin="round"><path d="M3 12a9 9 0 1 0 9-9 9.75 9.75 0 0 0-6.74 2.74L3 8"/><path d="M3 3v5h5"/></g>
<text x="453.6" y="939.18" font-family="'Liberation Sans', sans-serif" font-size="20" font-weight="normal" fill="#e2e4e8">Loop Back</text>
<rect x="391" y="967.7" width="239.80" height="56.30" rx="16" fill="#0d1017" stroke="#28303d" stroke-width="1.2"/>
<g transform="translate(411.20,984.90) scale(0.9167)" fill="none" stroke="#ef5a4f" stroke-width="1.8" stroke-linecap="round" stroke-linejoin="round"><path d="M21.801 10A10 10 0 1 1 17 3.335"/><path d="m9 11 3 3L22 4"/></g>
<text x="453.6" y="1003.6" font-family="'Liberation Sans', sans-serif" font-size="20" font-weight="normal" fill="#e2e4e8">End</text>
<rect x="391" y="1032.12" width="239.80" height="56.30" rx="16" fill="#0d1017" stroke="#28303d" stroke-width="1.2"/>
<g transform="translate(411.20,1049.32) scale(0.9167)" fill="none" stroke="#eab308" stroke-width="1.8" stroke-linecap="round" stroke-linejoin="round"><path d="M15.5 3H5a2 2 0 0 0-2 2v14c0 1.1.9 2 2 2h14a2 2 0 0 0 2-2V8.5L15.5 3Z"/><path d="M15 3v6h6"/></g>
<text x="453.6" y="1068.02" font-family="'Liberation Sans', sans-serif" font-size="20" font-weight="normal" fill="#e2e4e8">Note</text>
<g filter="url(#shtool)">
<rect x="1230.5" y="1538.9" width="334.00" height="79.60" rx="39.8" fill="#1b1e27" stroke="#394152" stroke-width="1.3"/>
</g>
<g transform="translate(1267.10,1565.80) scale(1.0833)" fill="none" stroke="#1fcf95" stroke-width="2" stroke-linecap="round" stroke-linejoin="round"><path d="M15.2 3a2 2 0 0 1 1.4.6l3.8 3.8a2 2 0 0 1 .6 1.4V19a2 2 0 0 1-2 2H5a2 2 0 0 1-2-2V5a2 2 0 0 1 2-2z"/><path d="M17 21v-7a1 1 0 0 0-1-1H8a1 1 0 0 0-1 1v7"/><path d="M7 3v4a1 1 0 0 0 1 1h7"/></g>
<line x1="1322.7" y1="1563.3" x2="1322.7" y2="1594.8" stroke="#394152" stroke-width="1.3"/>
<g transform="translate(1352.40,1565.80) scale(1.0833)" fill="none" stroke="#1fcf95" stroke-width="2" stroke-linecap="round" stroke-linejoin="round"><path d="M15 2H6a2 2 0 0 0-2 2v16a2 2 0 0 0 2 2h12a2 2 0 0 0 2-2V7Z"/><path d="M14 2v4a2 2 0 0 0 2 2h4"/><path d="M12 18v-6"/><path d="m9 15 3 3 3-3"/></g>
<g transform="translate(1416.60,1565.80) scale(1.0833)" fill="none" stroke="#1fcf95" stroke-width="2" stroke-linecap="round" stroke-linejoin="round"><path d="M15 2H6a2 2 0 0 0-2 2v16a2 2 0 0 0 2 2h12a2 2 0 0 0 2-2V7Z"/><path d="M14 2v4a2 2 0 0 0 2 2h4"/><path d="M12 12v6"/><path d="m15 15-3-3-3 3"/></g>
<line x1="1472.2" y1="1563.3" x2="1472.2" y2="1594.8" stroke="#394152" stroke-width="1.3"/>
<g transform="translate(1501.80,1565.50) scale(1.0833)" fill="none" stroke="#1fcf95" stroke-width="2" stroke-linecap="round" stroke-linejoin="round"><path d="M3 12a9 9 0 1 0 9-9 9.75 9.75 0 0 0-6.74 2.74L3 8"/><path d="M3 3v5h5"/></g>
<rect x="2370.1" y="1627" width="94.90" height="31.00" rx="0" fill="#868a8e"/>
<text x="2375.7" y="1647.8" font-family="'Liberation Sans', sans-serif" font-size="16.4" font-weight="normal" fill="#90949b">React Flow</text>
<rect x="2465" y="136" width="514.00" height="1522.00" rx="0" fill="#1b1e27"/>
<rect x="2465" y="136" width="514.00" height="1522.00" rx="0" fill="url(#dots2)"/>
<rect x="2465" y="136" width="514.00" height="123.00" rx="0" fill="#0e1118"/>
<line x1="2465" y1="258.5" x2="2979" y2="258.5" stroke="#313d52" stroke-width="1.3"/>
<line x1="2465.5" y1="136" x2="2465.5" y2="1658" stroke="#2e3748" stroke-width="1.2"/>
<text x="2492.2" y="186.7" font-family="'Liberation Sans', sans-serif" font-size="22.5" font-weight="bold" fill="#eceef1">Condition Node</text>
<text x="2492" y="223.5" font-family="'Liberation Mono', monospace" font-size="19.3" font-weight="normal" fill="#858c97">ID: node_1765195450658</text>
<g transform="translate(2914.70,184.30) scale(1.0833)" fill="none" stroke="#f05a4f" stroke-width="2" stroke-linecap="round" stroke-linejoin="round"><path d="M3 6h18"/><path d="M19 6v14c0 1-1 2-2 2H7c-1 0-2-1-2-2V6"/><path d="M8 6V4c0-1 1-2 2-2h4c1 0 2 1 2 2v2"/><line x1="10" x2="10" y1="11" y2="17"/><line x1="14" x2="14" y1="11" y2="17"/></g>
<text x="2492" y="315.4" font-family="'Liberation Sans', sans-serif" font-size="20" font-weight="bold" fill="#767e8b" letter-spacing="0.9">Node Name</text>
<rect x="2492" y="327.8" width="461.00" height="50.20" rx="10" fill="#0c0f16" stroke="#2c3340" stroke-width="1.2"/>
<text x="2513" y="360.6" font-family="'Liberation Sans', sans-serif" font-size="20.4" font-weight="normal" fill="#e5e7eb">Retrieval Classification Condition</text>
<rect x="2492" y="404.6" width="461.00" height="66.70" rx="12" fill="#1a2538" stroke="#2d3c55" stroke-width="1.2"/>
<g transform="translate(2510.80,427.80) scale(0.9167)" fill="none" stroke="#5aa2f5" stroke-width="1.7" stroke-linecap="round" stroke-linejoin="round"><circle cx="12" cy="12" r="10"/><path d="M12 16v-4"/><path d="M12 8h.01"/></g>
<text x="2537" y="446.7" font-family="'Liberation Sans', sans-serif" font-size="20.6" font-weight="normal" fill="#5aa2f5">Create conditions to branch your workflow</text>
<text x="2492.4" y="519" font-family="'Liberation Sans', sans-serif" font-size="20" font-weight="bold" fill="#767e8b" letter-spacing="0.9">Condition :</text>
<rect x="2492.5" y="543.8" width="460.50" height="418.30" rx="12" fill="#0e1119" stroke="#2d3442" stroke-width="1.2"/>
<text x="2513" y="584.4" font-family="'Liberation Sans', sans-serif" font-size="19.6" font-weight="bold" fill="#d1d5db">IF</text>
<g transform="translate(2912.60,565.80) scale(0.8750)" fill="none" stroke="#e8603c" stroke-width="2" stroke-linecap="round" stroke-linejoin="round"><path d="M3 6h18"/><path d="M19 6v14c0 1-1 2-2 2H7c-1 0-2-1-2-2V6"/><path d="M8 6V4c0-1 1-2 2-2h4c1 0 2 1 2 2v2"/><line x1="10" x2="10" y1="11" y2="17"/><line x1="14" x2="14" y1="11" y2="17"/></g>
<text x="2513" y="631.8" font-family="'Liberation Sans', sans-serif" font-size="20" font-weight="normal" fill="#9097a2">Case name (optional)</text>
<rect x="2513" y="644.2" width="419.40" height="50.00" rx="10" fill="#1b1e27" stroke="#3a4150" stroke-width="1.2"/>
<text x="2533.9" y="676.7" font-family="'Liberation Sans', sans-serif" font-size="20.5" font-weight="normal" fill="#6f7783">e.g., return_item</text>
<text x="2513" y="736.8" font-family="'Liberation Sans', sans-serif" font-size="20" font-weight="normal" fill="#9097a2">Expression</text>
<rect x="2513" y="749.8" width="419.40" height="127.00" rx="10" fill="#1b1e27" stroke="#3a4150" stroke-width="1.2"/>
<text x="2535" y="785.3" font-family="'Liberation Mono', monospace" font-size="19.1" font-weight="normal" fill="#f3f4f6">input.tools == &quot;A&quot;</text>
<text x="2513" y="911.3" font-family="'Liberation Sans', sans-serif" font-size="20.1" font-weight="normal" fill="#9097a2">Use Common Expression Language to create</text>
<text x="2513" y="936.8" font-family="'Liberation Sans', sans-serif" font-size="20.1" font-weight="normal" fill="#9097a2">a custom expression.</text>
<rect x="2492.5" y="983.1" width="460.50" height="418.30" rx="12" fill="#0e1119" stroke="#2d3442" stroke-width="1.2"/>
<text x="2513" y="1023.7" font-family="'Liberation Sans', sans-serif" font-size="18.2" font-weight="bold" fill="#d1d5db" letter-spacing="1.2">ELSE IF</text>
<g transform="translate(2912.60,1005.10) scale(0.8750)" fill="none" stroke="#e8603c" stroke-width="2" stroke-linecap="round" stroke-linejoin="round"><path d="M3 6h18"/><path d="M19 6v14c0 1-1 2-2 2H7c-1 0-2-1-2-2V6"/><path d="M8 6V4c0-1 1-2 2-2h4c1 0 2 1 2 2v2"/><line x1="10" x2="10" y1="11" y2="17"/><line x1="14" x2="14" y1="11" y2="17"/></g>
<text x="2513" y="1071.1" font-family="'Liberation Sans', sans-serif" font-size="20" font-weight="normal" fill="#9097a2">Case name (optional)</text>
<rect x="2513" y="1083.5" width="419.40" height="50.00" rx="10" fill="#1b1e27" stroke="#3a4150" stroke-width="1.2"/>
<text x="2533.9" y="1116.0" font-family="'Liberation Sans', sans-serif" font-size="20.5" font-weight="normal" fill="#6f7783">e.g., return_item</text>
<text x="2513" y="1176.1" font-family="'Liberation Sans', sans-serif" font-size="20" font-weight="normal" fill="#9097a2">Expression</text>
<rect x="2513" y="1189.1" width="419.40" height="127.00" rx="10" fill="#1b1e27" stroke="#3a4150" stroke-width="1.2"/>
<text x="2535" y="1224.6" font-family="'Liberation Mono', monospace" font-size="19.1" font-weight="normal" fill="#f3f4f6">input.tools == &quot;B&quot;</text>
<text x="2513" y="1350.6" font-family="'Liberation Sans', sans-serif" font-size="20.1" font-weight="normal" fill="#9097a2">Use Common Expression Language to create</text>
<text x="2513" y="1376.1" font-family="'Liberation Sans', sans-serif" font-size="20.1" font-weight="normal" fill="#9097a2">a custom expression.</text>
<rect x="2492.9" y="1422" width="460.10" height="50.30" rx="8" fill="#1b1e27" stroke="#2b3343" stroke-width="1.2"/>
<g transform="translate(2685.70,1437.00) scale(0.9167)" fill="none" stroke="#d1d5db" stroke-width="2" stroke-linecap="round" stroke-linejoin="round"><path d="M5 12h14"/><path d="M12 5v14"/></g>
<text x="2722" y="1455.5" font-family="'Liberation Sans', sans-serif" font-size="19" font-weight="bold" fill="#d1d5db">Add</text>
<rect x="330" y="1658" width="2649.00" height="47.00" rx="0" fill="#0d1017"/>
<line x1="330" y1="1658.5" x2="2979" y2="1658.5" stroke="#2a3547" stroke-width="1.2"/>
<g transform="translate(357.00,1672.00) scale(0.9167)" fill="none" stroke="#c4c8cf" stroke-width="2" stroke-linecap="round" stroke-linejoin="round"><polyline points="4 17 10 11 4 5"/><line x1="12" x2="20" y1="19" y2="19"/></g>
<text x="388.8" y="1689" font-family="'Liberation Sans', sans-serif" font-size="20" font-weight="normal" fill="#c4c8cf">Console</text>
<g transform="translate(488.00,1671.00) scale(0.9167)" fill="none" stroke="#c4c8cf" stroke-width="2" stroke-linecap="round" stroke-linejoin="round"><path d="M4 15s1-1 4-1 5 2 8 2 4-1 4-1V3s-1 1-4 1-5-2-8-2-4 1-4 1z"/><line x1="4" x2="4" y1="22" y2="15"/></g>
<text x="520.8" y="1689" font-family="'Liberation Sans', sans-serif" font-size="20.7" font-weight="normal" fill="#c4c8cf">Log diagnostics report</text>
<g transform="translate(750.50,1671.00) scale(0.9167)" fill="none" stroke="#1fb356" stroke-width="2" stroke-linecap="round" stroke-linejoin="round"><circle cx="12" cy="12" r="10"/><path d="M12 16v-4"/><path d="M12 8h.01"/></g>
<text x="783.9" y="1689" font-family="'Liberation Sans', sans-serif" font-size="19.7" font-weight="normal" fill="#1fb356">Runtime:</text>
<text x="874" y="1689" font-family="'Liberation Sans', sans-serif" font-size="20" font-weight="bold" fill="#1fb356">Metal</text>
<text x="2467.7" y="1689" font-family="'Liberation Sans', sans-serif" font-size="19" font-weight="normal" fill="#d1d5db">Sapientia v1.1.1</text>
<g transform="translate(2612.50,1672.00) scale(0.9167)" fill="none" stroke="#d1d5db" stroke-width="2.4" stroke-linecap="round" stroke-linejoin="round"><path d="m18 15-6-6-6 6"/></g>
<text x="2659.3" y="1689" font-family="'Liberation Sans', sans-serif" font-size="20.6" font-weight="normal" fill="#9ca3af">© 2026, sapientia.godiscus.com</text>
</g>
<rect x="227.5" y="84.5" width="2751" height="1620" rx="24.5" fill="none" stroke="#0a0c11" stroke-width="1"/>
<rect x="228.5" y="85.5" width="2749" height="1618" rx="23.5" fill="none" stroke="#3a404c" stroke-width="1"/>
</svg>
</body></html>
